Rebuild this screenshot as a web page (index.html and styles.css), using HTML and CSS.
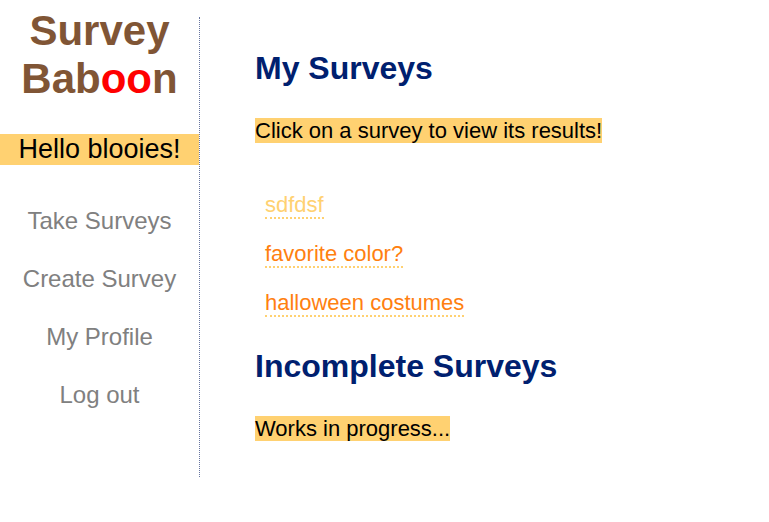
FILE: index.html
```html
<!DOCTYPE html>
<html lang="en">
<head>
<meta charset="utf-8">
<title>Survey Baboon</title>
<link rel="stylesheet" href="styles.css">
</head>
<body>
<div class="page">
  <aside class="sidebar">
    <h1 class="logo">Survey Bab<span class="logo-eyes">oo</span>n</h1>
    <p class="greeting">Hello blooies!</p>
    <nav class="menu">
      <a href="#">Take Surveys</a>
      <a href="#">Create Survey</a>
      <a href="#">My Profile</a>
      <a href="#">Log out</a>
    </nav>
  </aside>
  <main class="content">
    <h2>My Surveys</h2>
    <p><span class="note">Click on a survey to view its results!</span></p>
    <ul class="surveys">
      <li><a class="active" href="#">sdfdsf</a></li>
      <li><a href="#">favorite color?</a></li>
      <li><a href="#">halloween costumes</a></li>
    </ul>
    <h2>Incomplete Surveys</h2>
    <p><span class="note">Works in progress...</span></p>
  </main>
</div>
</body>
</html>
```
FILE: styles.css
```css
body {
  margin: 0;
  background: #fff;
  color: #000;
  font-family: "Liberation Sans", Arial, sans-serif;
}

h1, h2, p, ul {
  margin: 0;
  padding: 0;
}

.page {
  display: flex;
  padding: 17px 0 44px;
}

.sidebar {
  flex: 0 0 199px;
  border-right: 1px dotted #66749f;
  padding-bottom: 67px;
  text-align: center;
}

.logo {
  margin-top: -10px;
  color: #805535;
  font-size: 42px;
  line-height: 48px;
}

.logo-eyes {
  color: #f00;
}

.greeting {
  margin-top: 31px;
  background: #ffd171;
  font-size: 27px;
  line-height: 31px;
}

.menu {
  display: flex;
  flex-direction: column;
  gap: 28px;
  margin-top: 41px;
}

.menu a {
  color: #808080;
  font-size: 24px;
  line-height: 30px;
  text-decoration: none;
}

.content {
  flex: 1;
  padding: 31px 0 0 55px;
  font-size: 22px;
  line-height: 25px;
}

h2 {
  color: #00206f;
  font-size: 32px;
  line-height: 40px;
}

h2 + p {
  margin-top: 30px;
}

.note {
  background: #ffd171;
}

.surveys {
  margin: 49px 0 31px 10px;
  list-style: none;
}

.surveys li + li {
  margin-top: 24px;
}

.surveys a {
  border-bottom: 2px dotted #ffd171;
  color: #ff8010;
  text-decoration: none;
}

.surveys .active {
  color: #ffd171;
}
```
